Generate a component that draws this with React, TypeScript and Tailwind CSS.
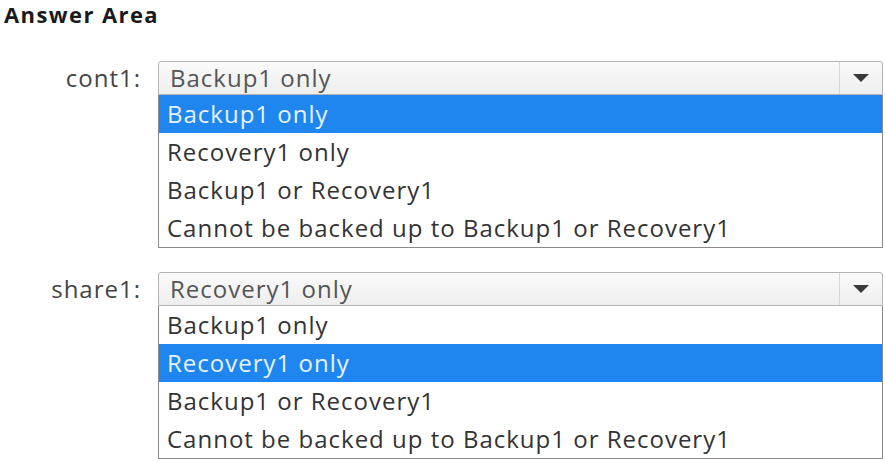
type Question = {
  label: string;
  selected: string;
};

const OPTIONS = [
  "Backup1 only",
  "Recovery1 only",
  "Backup1 or Recovery1",
  "Cannot be backed up to Backup1 or Recovery1",
];

const QUESTIONS: Question[] = [
  { label: "cont1:", selected: "Backup1 only" },
  { label: "share1:", selected: "Recovery1 only" },
];

function Dropdown({ q }: { q: Question }) {
  return (
    <div className="flex items-start">
      <div className="w-[158px] pr-[17px] text-right text-[24px] tracking-[1px] leading-[34px] text-[#444]">
        {q.label}
      </div>
      <div className="flex-1 mr-[2px]">
        {/* closed select */}
        <div className="flex h-[34px] border border-[#b4b4b4] rounded-t-[3px] bg-gradient-to-b from-[#fafafa] to-[#eeeeee]">
          <div className="flex-1 pl-[11px] text-[24px] tracking-[1px] leading-[32px] text-[#555] whitespace-nowrap">
            {q.selected}
          </div>
          <div className="w-[43px] flex items-center justify-center border-l border-[#d6d6d6]">
            <svg width="16" height="10" viewBox="0 0 16 10">
              <polygon points="0,1 16,1 8,9" fill="#3a3a3a" />
            </svg>
          </div>
        </div>
        {/* open list */}
        <div className="border border-[#8a8a8a] border-t-0 bg-white">
          {OPTIONS.map((o) => {
            const active = o === q.selected;
            return (
              <div
                key={o}
                className={`h-[38px] pl-[8px] text-[24px] tracking-[1px] leading-[38px] whitespace-nowrap ${
                  active ? "bg-[#1f86ef] text-[#e6f3ff]" : "text-[#333]"
                }`}
              >
                {o}
              </div>
            );
          })}
        </div>
      </div>
    </div>
  );
}

export default function App() {
  return (
    <div className="w-[885px] h-[461px] bg-white overflow-hidden font-['Open_Sans',sans-serif]">
      <h1 className="pl-[4px] pt-[0px] text-[22px] font-bold leading-[28px] text-[#1a1a1a] tracking-[1.4px]">
        Answer Area
      </h1>
      <div className="mt-[33px] flex flex-col gap-[24px]">
        {QUESTIONS.map((q) => (
          <Dropdown key={q.label} q={q} />
        ))}
      </div>
    </div>
  );
}
